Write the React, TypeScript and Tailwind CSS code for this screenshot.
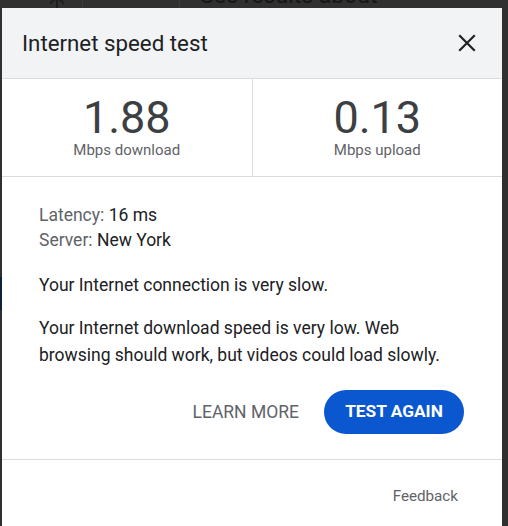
import React from "react";

export default function App() {
  return (
    <div
      className="relative w-[508px] h-[526px] overflow-hidden bg-[#303030]"
      style={{ fontFamily: "Roboto, 'Noto Sans', Arial, sans-serif" }}
    >
      {/* dimmed page behind */}
      <div className="absolute left-0 top-0 w-full h-[8px] flex">
        <div className="w-[83px] h-full border-r border-[#3a3a3a] relative">
          <svg className="absolute left-[48px] top-[-6px]" width="18" height="14" viewBox="0 0 18 14">
            <path d="M2 10 Q9 0 16 10" stroke="#1e1e1e" strokeWidth="2" fill="none" />
            <path d="M9 4 L9 14" stroke="#1e1e1e" strokeWidth="2" />
          </svg>
        </div>
        <div className="w-[97px] h-full border-r border-[#3a3a3a]" />
        <div className="relative flex-1">
          <span className="absolute left-[20px] top-[-16px] text-[23px] leading-[23px] text-[#161616] whitespace-nowrap">
            See results about
          </span>
        </div>
      </div>
      <div className="absolute left-0 top-[277px] w-[2px] h-[33px] bg-[#0d2238]" />

      {/* dialog */}
      <div className="absolute left-[2px] top-[8px] w-[500px] h-[518px] bg-white flex flex-col">
        <div className="h-[71px] bg-[#f1f3f4] border-b border-[#dadce0] flex items-center justify-between pl-[20px] pr-[26px] shrink-0">
          <span className="text-[22.3px] text-[#202124] leading-none">Internet speed test</span>
          <svg width="18" height="18" viewBox="0 0 18 18">
            <path d="M2 2 L16 16 M16 2 L2 16" stroke="#202124" strokeWidth="2.2" strokeLinecap="square" />
          </svg>
        </div>
        <div className="h-[98px] flex border-b border-[#dadce0] shrink-0">
          <div className="flex-1 flex flex-col items-center pt-[19px] border-r border-[#dadce0]">
            <span className="text-[45px] leading-[40px] text-[#3c4043]">1.88</span>
            <span className="text-[15px] leading-[16px] text-[#5f6368] mt-[4px]">Mbps download</span>
          </div>
          <div className="flex-1 flex flex-col items-center pt-[19px]">
            <span className="text-[45px] leading-[40px] text-[#3c4043]">0.13</span>
            <span className="text-[15px] leading-[16px] text-[#5f6368] mt-[4px]">Mbps upload</span>
          </div>
        </div>
        <div className="pl-[37px] pr-[38px] pt-[26px] text-[17.5px] text-[#202124]">
          <div className="leading-[25px]">
            <span className="text-[#5f6368]">Latency: </span>16 ms
          </div>
          <div className="leading-[25px]">
            <span className="text-[#5f6368]">Server: </span>New York
          </div>
          <p className="leading-[26px] mt-[19px]">Your Internet connection is very slow.</p>
          <p className="leading-[27px] mt-[17px]">
            Your Internet download speed is very low. Web browsing should work, but videos could load slowly.
          </p>
          <div className="flex justify-end items-center mt-[21px] gap-[25px]">
            <span className="text-[17.5px] text-[#5f6368]">LEARN MORE</span>
            <button className="w-[140px] h-[44px] rounded-full bg-[#0b57d0] text-white text-[17.3px] font-bold">
              TEST AGAIN
            </button>
          </div>
        </div>
        <div className="mt-[25px] border-t border-[#dadce0] flex-1 flex justify-end items-start pt-[27px] pr-[44px]">
          <span className="text-[15.2px] text-[#5f6368] leading-[18px]">Feedback</span>
        </div>
      </div>
    </div>
  );
}
